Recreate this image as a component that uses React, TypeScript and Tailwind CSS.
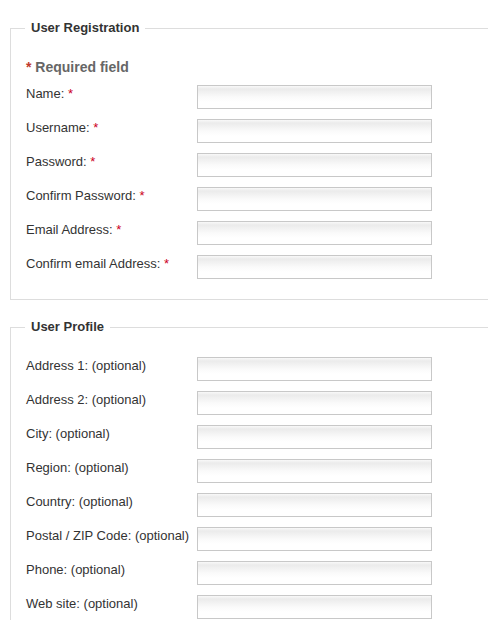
import React from "react";

const inputCls =
  "block w-[235px] h-[24px] border border-[#c8c8c8] bg-[linear-gradient(to_bottom,#f9f9f9_0px,#ebebeb_3px,#fafafa_11px,#ffffff_16px)] outline-none";

function Row({ label, req, optional }: { label: string; req?: boolean; optional?: boolean }) {
  return (
    <div className="flex items-start">
      <label className="w-[171px] shrink-0 text-[13px] leading-[18px] text-[#333]">
        {label}
        {req && <span className="text-[#cc0022]"> *</span>}
        {optional && <span> (optional)</span>}
      </label>
      <input type="text" className={inputCls} />
    </div>
  );
}

export default function App() {
  return (
    <div
      className="w-[488px] overflow-hidden bg-white pb-[40px]"
      style={{ fontFamily: '"Liberation Sans", Arial, sans-serif' }}
    >
      <fieldset className="ml-[10px] mt-[19px] w-[520px] border border-[#dddddd] pl-[15px] pt-[21px] pb-[20px]">
        <legend className="ml-[-1px] px-[6px] text-[13px] font-bold leading-[18px] text-[#333]">
          User Registration
        </legend>
        <div className="mb-[9px] text-[14px] font-bold leading-[18px] text-[#666]">
          <span className="text-[#c0392b]">*</span> Required field
        </div>
        <div className="flex flex-col gap-[10px]">
          <Row label="Name:" req />
          <Row label="Username:" req />
          <Row label="Password:" req />
          <Row label="Confirm Password:" req />
          <Row label="Email Address:" req />
          <Row label="Confirm email Address:" req />
        </div>
      </fieldset>
      <fieldset className="ml-[10px] mt-[18px] w-[520px] border border-[#dddddd] pl-[15px] pt-[21px] pb-[19px]">
        <legend className="ml-[-1px] px-[6px] text-[13px] font-bold leading-[18px] text-[#333]">
          User Profile
        </legend>
        <div className="flex flex-col gap-[10px]">
          <Row label="Address 1:" optional />
          <Row label="Address 2:" optional />
          <Row label="City:" optional />
          <Row label="Region:" optional />
          <Row label="Country:" optional />
          <Row label="Postal / ZIP Code:" optional />
          <Row label="Phone:" optional />
          <Row label="Web site:" optional />
        </div>
      </fieldset>
    </div>
  );
}
